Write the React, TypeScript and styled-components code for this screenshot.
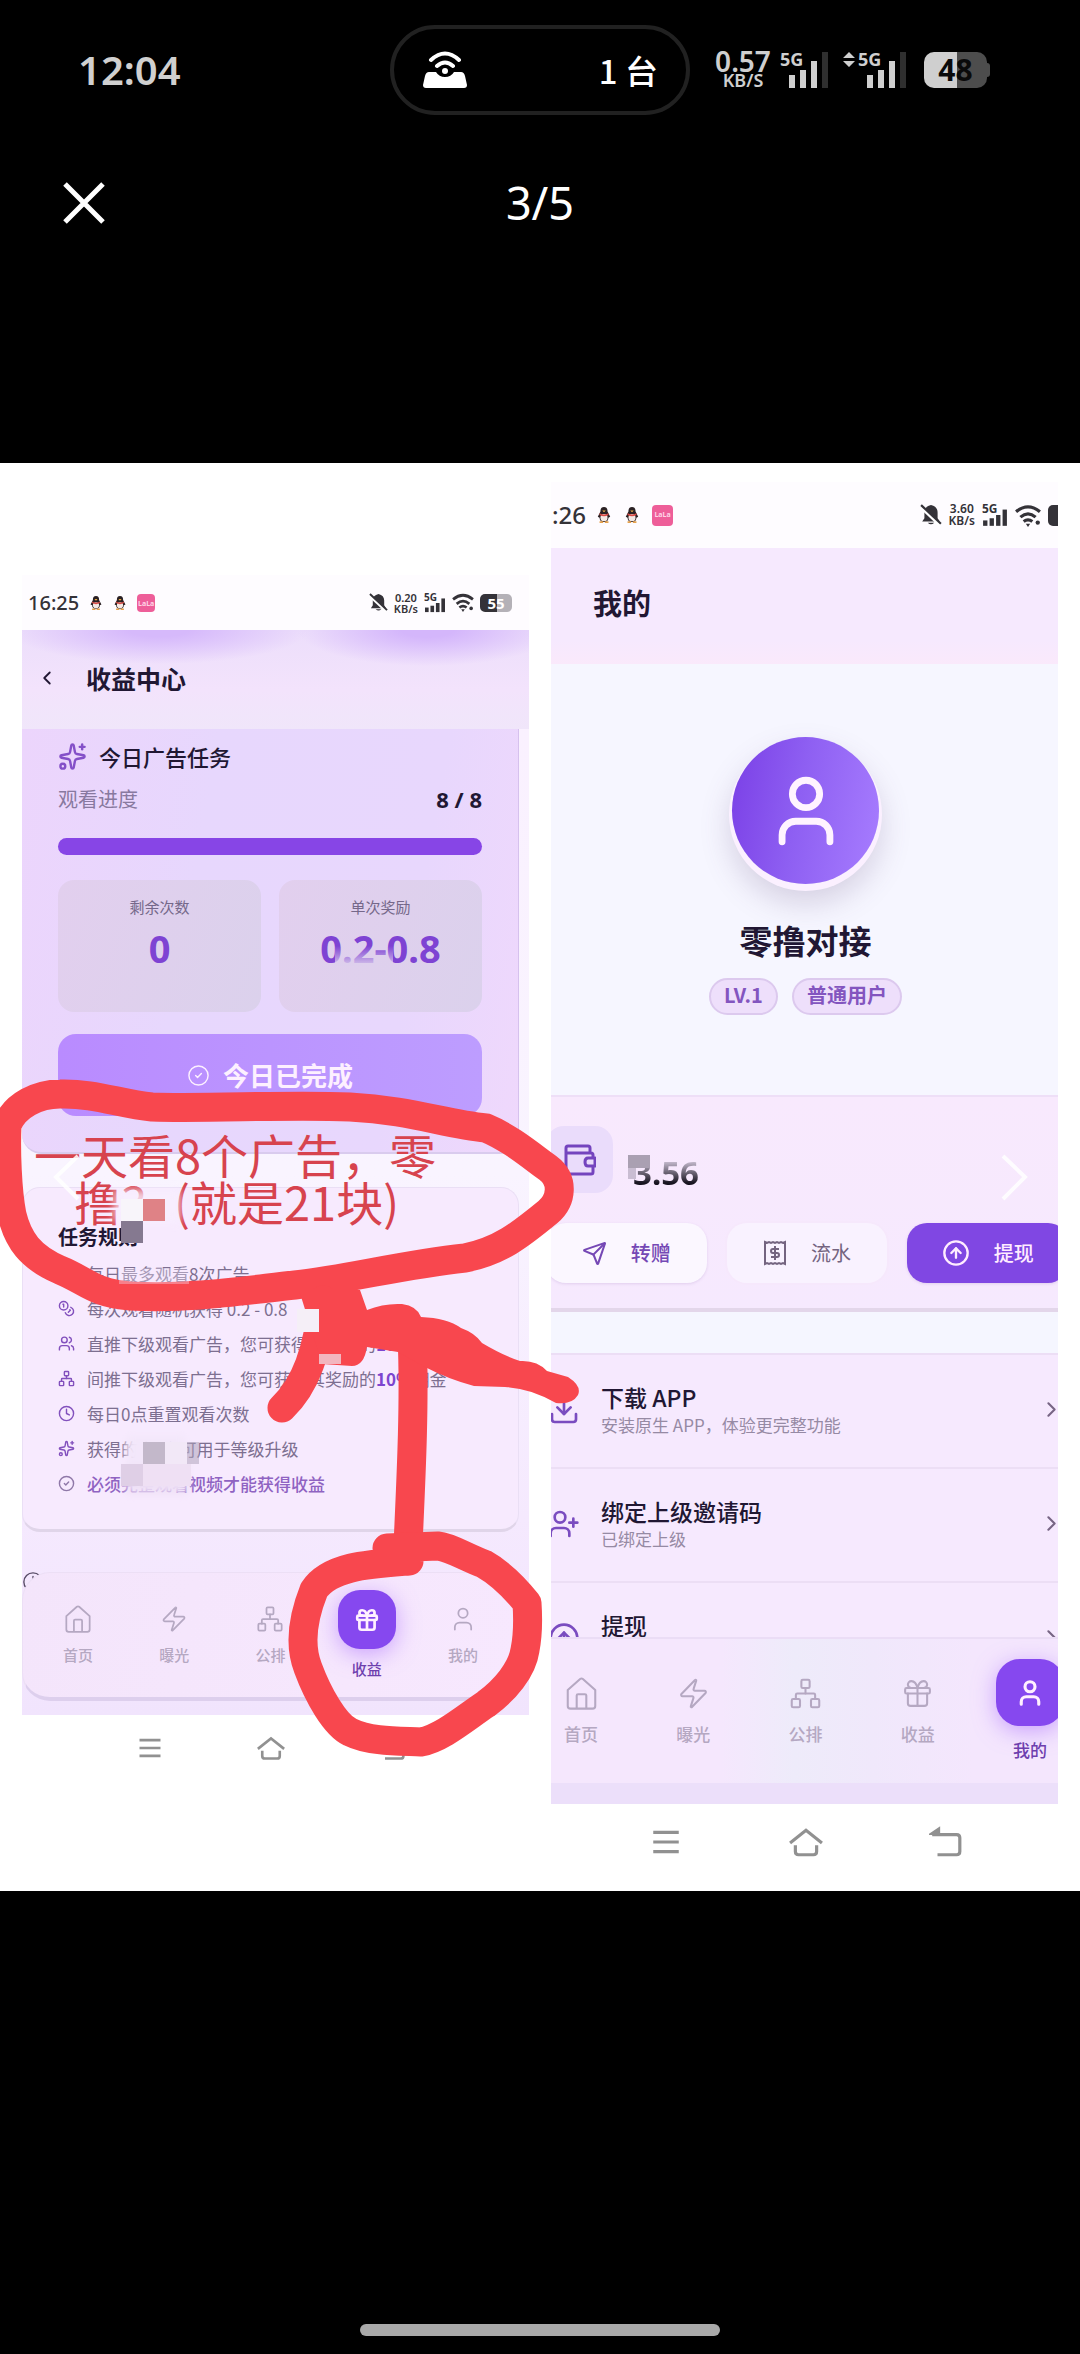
import React from "react";
import styled, { createGlobalStyle, css } from "styled-components";
import {
  ChevronLeft,
  ChevronRight,
  CircleArrowUp,
  CircleCheck,
  Clock,
  Coins,
  Download,
  Gift,
  Network,
  Send,
  Sparkles,
  User,
  UserPlus,
  Users,
  Zap,
} from "lucide-react";

const sans = `"Noto Sans", "Noto Sans CJK SC", sans-serif`;
const cjk = `"Noto Sans CJK SC", "Noto Sans", sans-serif`;
const ink = "#211733";
const violet = "#7d45cf";
const marker = "#f8474e";

const GlobalStyle = createGlobalStyle`
  *, *::before, *::after { box-sizing: border-box; }
  body { margin: 0; background: #000; font-family: ${cjk}; }
  button { border: 0; margin: 0; padding: 0; background: none; font: inherit; color: inherit; }
  h1, h2, p, ul { margin: 0; padding: 0; font-size: inherit; font-weight: inherit; }
  ul { list-style: none; }
  svg { display: block; flex: none; }
`;

const Viewer = styled.main`
  min-height: 100vh;
  display: flex;
  flex-direction: column;
  background: #000;
  color: #fff;
`;

/* ---------- device status bar ---------- */

const DeviceBar = styled.header`
  display: grid;
  grid-template-columns: 390px 300px 1fr;
  align-items: center;
  height: 139px;
`;
const DeviceTime = styled.time`
  padding-left: 78px;
  font: 600 40px/56px ${sans};
  color: #d0d0d0;
`;
const Island = styled.div`
  display: flex;
  align-items: center;
  justify-content: space-between;
  height: 90px;
  padding: 0 28px;
  border: 4px solid #212121;
  border-radius: 45px;
  font: 500 33px/40px ${cjk};
`;
const DeviceSignals = styled.div`
  display: flex;
  align-items: center;
  padding-left: 24px;
  color: #cfcfcf;
`;
const Speed = styled.div`
  display: flex;
  flex-direction: column;
  align-items: center;
  width: 58px;
  margin-right: 8px;
  font: 600 28px/20px ${sans};
  small { font-size: 18px; line-height: 18px; }
`;
const DeviceBattery = styled.div`
  display: flex;
  align-items: center;
  margin-left: 18px;
  &::after {
    content: "";
    width: 3px;
    height: 14px;
    border-radius: 0 3px 3px 0;
    background: #4d4d4d;
  }
`;
const DeviceCell = styled.span`
  width: 63px;
  height: 36px;
  border-radius: 10px;
  background: linear-gradient(90deg, #cfcfcf 52%, #4d4d4d 52%);
  color: #0a0a0a;
  font: 700 30px/36px ${sans};
  text-align: center;
`;
const SignalGroup = styled.div`
  display: flex;
  gap: 14px;
`;

const Toolbar = styled.div`
  display: grid;
  grid-template-columns: 1fr auto 1fr;
  align-items: center;
  height: 128px;
  margin-bottom: 196px;
  padding: 0 60px;
`;
const CloseButton = styled.button`
  justify-self: start;
`;
const Counter = styled.span`
  font: 400 45px/60px ${sans};
`;

/* ---------- photo ---------- */

const Photo = styled.section`
  position: relative;
  display: grid;
  grid-template-columns: 1fr 1fr;
  gap: 22px;
  align-items: start;
  padding: 0 22px;
  background: #fff;
  color: ${ink};
`;
const Shot = styled.article<{ $top: number; $bottom: number }>`
  min-width: 0;
  padding-top: ${(p) => p.$top}px;
  padding-bottom: ${(p) => p.$bottom}px;
`;
const ShotBar = styled.div<{ $large?: boolean }>`
  display: flex;
  align-items: center;
  height: ${(p) => (p.$large ? 66 : 55)}px;
  padding-left: ${(p) => (p.$large ? 1 : 6)}px;
  padding-right: ${(p) => (p.$large ? 0 : 17)}px;
  overflow: hidden;
  color: #343238;
  font: 500 ${(p) => (p.$large ? 24 : 20)}px/30px ${sans};
  background: #fefcff;
`;
const BarApps = styled.span<{ $large?: boolean }>`
  display: flex;
  align-items: center;
  gap: ${(p) => (p.$large ? 12 : 10)}px;
  margin-left: 10px;
`;
const BarTools = styled.span<{ $large?: boolean }>`
  display: flex;
  align-items: center;
  gap: ${(p) => (p.$large ? 7 : 6)}px;
  margin-left: auto;
`;
const PinkApp = styled.span<{ $large?: boolean }>`
  width: ${(p) => (p.$large ? 21 : 18)}px;
  height: ${(p) => (p.$large ? 21 : 18)}px;
  border-radius: 4px;
  background: #ee5e99;
  color: #ffd3e6;
  font: 700 7px/20px ${sans};
  text-align: center;
`;
const SmallSpeed = styled.span<{ $large?: boolean }>`
  display: flex;
  flex-direction: column;
  align-items: center;
  font: 600 ${(p) => (p.$large ? 12 : 11)}px/${(p) => (p.$large ? 12 : 11)}px ${sans};
`;
const SmallBattery = styled.span<{ $clipped?: boolean }>`
  width: ${(p) => (p.$clipped ? 10 : 32)}px;
  height: ${(p) => (p.$clipped ? 21 : 18)}px;
  border-radius: ${(p) => (p.$clipped ? "5px 0 0 5px" : "5px")};
  background: ${(p) => (p.$clipped ? "#343238" : "linear-gradient(90deg, #343238 52%, #b4b1b7 52%)")};
  color: #fff;
  font: 700 15px/18px ${sans};
  text-align: center;
`;

const PageHead = styled.header<{ $large?: boolean }>`
  display: flex;
  align-items: center;
  overflow: hidden;
  ${(p) =>
    p.$large
      ? css`
          height: 116px;
          padding: 0 0 8px 42px;
          background: linear-gradient(#f6e9fe 80%, #fae9fb);
          font: 700 29px/40px ${cjk};
        `
      : css`
          height: 99px;
          padding: 0 0 4px 14px;
          gap: 28px;
          background:
            radial-gradient(ellipse 150px 34px at 27% 0, #d6b9fb 20%, #d6b9fb00),
            radial-gradient(ellipse 130px 36px at 80% 0, #d4b6fb 20%, #d4b6fb00),
            linear-gradient(#ecdefb, #f3e3fc 60%, #f0e6fa);
          font: 700 25px/36px ${cjk};
        `}
`;

const EarnBody = styled.div`
  padding: 0 10px 14px 0;
  background: linear-gradient(#faf1ff 0%, #f9f4ff 45%, #f5e9fe 80%, #f1e4fd);
`;
const TaskCard = styled.section`
  padding: 13px 36px 36px;
  border-right: 1px solid #d6c1ee;
  border-bottom: 2px solid #d9cbee;
  border-radius: 0 0 20px 20px;
  background: linear-gradient(100deg, #ecd5fc, #e7d7fd 35%, #e8d7fd 75%, #efd8fc);
`;
const TaskTitle = styled.h2`
  display: flex;
  align-items: center;
  gap: 12px;
  height: 28px;
  font: 500 22px/28px ${cjk};
  svg { color: #8450c8; }
`;
const ProgressLine = styled.div`
  display: flex;
  justify-content: space-between;
  margin-top: 15px;
  font: 400 20px/28px ${cjk};
  color: #88799f;
  strong { font: 700 22px/28px ${sans}; color: ${ink}; }
`;
const ProgressTrack = styled.div`
  height: 17px;
  margin: 25px 0 25px;
  border-radius: 9px;
  background: #8745e6;
`;
const StatGrid = styled.div`
  display: grid;
  grid-template-columns: 1fr 1fr;
  gap: 18px;
`;
const Stat = styled.div`
  position: relative;
  height: 132px;
  padding-top: 16px;
  border-radius: 16px;
  background: linear-gradient(110deg, #e2cfee, #dbd1ec);
  text-align: center;
  color: #75688a;
  font: 400 15px/22px ${cjk};
  strong {
    display: block;
    margin-top: 9px;
    color: #7e43d3;
    font: 700 38px/42px ${sans};
  }
`;
const Smear = styled.span`
  position: absolute;
  left: 56px;
  top: 66px;
  width: 58px;
  height: 20px;
  background: linear-gradient(#ded0ed00, #ded0edee);
`;
const DoneButton = styled.button`
  display: flex;
  align-items: center;
  justify-content: center;
  gap: 13px;
  width: 100%;
  height: 82px;
  margin-top: 22px;
  border-radius: 18px;
  background: linear-gradient(90deg, #b98bff, #bd9dff);
  color: #fdf0ff;
  font: 700 26px/36px ${cjk};
`;

const RulesCard = styled.section`
  margin-top: 33px;
  padding: 37px 20px 28px 35px;
  border: 1px solid #eadff5;
  border-bottom: 3px solid #e0d5e9;
  border-radius: 18px;
  background: #f7eafe;
`;
const RulesTitle = styled.h2`
  margin-bottom: 7px;
  font: 700 20px/24px ${cjk};
`;
const Rule = styled.li<{ $accent?: boolean }>`
  display: flex;
  align-items: center;
  gap: 12px;
  height: 35px;
  white-space: nowrap;
  font: ${(p) => (p.$accent ? 500 : 400)} 17px/24px ${cjk};
  color: ${(p) => (p.$accent ? "#8f63c2" : "#7d6f90")};
  svg { color: ${(p) => (p.$accent ? "#8f78a8" : "#8250bd")}; }
  strong { font-weight: 700; color: ${violet}; }
`;
const LooseIcon = styled.div`
  height: 20px;
  margin-top: 39px;
  color: #584c66;
`;

const TabBar = styled.nav<{ $wide?: boolean }>`
  position: relative;
  display: grid;
  grid-template-columns: repeat(5, 1fr);
  align-items: start;
  ${(p) =>
    p.$wide
      ? css`
          height: 146px;
          margin: 0 -28px 0 -26px;
          padding-top: 38px;
          border-top: 2px solid #ebddf6;
          background: linear-gradient(90deg, #f5e7fd 35%, #eeebfa 48%, #f0e8fb 62%, #f4e6fd 80%);
          font: 500 17px/24px ${cjk};
        `
      : css`
          height: 129px;
          margin-top: -19px;
          padding: 32px 7px 0;
          border: 1px solid #ecdff5;
          border-bottom: 4px solid #ddcfed;
          border-radius: 28px;
          background: linear-gradient(100deg, #f4e5fb, #f7e8fe);
          font: 500 15px/20px ${cjk};
        `}
`;
const Tab = styled.button<{ $wide?: boolean; $active?: boolean }>`
  display: flex;
  flex-direction: column;
  align-items: center;
  gap: ${(p) => (p.$wide ? 12 : p.$active ? 10 : 12)}px;
  margin-top: ${(p) => (p.$active ? (p.$wide ? -18 : -15) : 0)}px;
  color: ${(p) => (p.$active ? "#6d3eae" : "#b5a8c2")};
`;
const TabPlate = styled.span<{ $wide?: boolean }>`
  display: grid;
  place-items: center;
  width: ${(p) => (p.$wide ? 68 : 58)}px;
  height: ${(p) => (p.$wide ? 67 : 59)}px;
  border-radius: ${(p) => (p.$wide ? 24 : 22)}px;
  background: #8648ef;
  color: #fff0ff;
  box-shadow: 0 5px 22px #a566ff88;
`;
const SystemKeys = styled.div<{ $wide?: boolean }>`
  display: flex;
  justify-content: center;
  gap: ${(p) => (p.$wide ? 106 : 93)}px;
  padding: ${(p) => (p.$wide ? "21px 0 0 2px" : "19px 10px 0 0")};
  color: #919191;
`;

const ProfileBody = styled.div`
  overflow: hidden;
  padding-bottom: 21px;
  background: #ecdffa;
`;
const Profile = styled.section`
  display: flex;
  flex-direction: column;
  align-items: center;
  padding: 73px 0 80px 2px;
  background: #f6f6ff;
`;
const Avatar = styled.div`
  display: grid;
  place-items: center;
  width: 147px;
  height: 147px;
  border-radius: 50%;
  background: linear-gradient(100deg, #7a3fe6, #8e5ff2 45%, #a77dff);
  color: #fff3ff;
  box-shadow: 0 4px 0 3px #fbf0ff, 0 17px 30px 2px #5f4a7a38;
`;
const UserName = styled.h1`
  margin-top: 36px;
  font: 700 33px/40px ${cjk};
`;
const Badges = styled.div`
  display: flex;
  gap: 14px;
  margin-top: 18px;
`;
const Badge = styled.span`
  height: 37px;
  padding: 0 13px;
  border: 2px solid #dcc9ee;
  border-radius: 19px;
  background: #eedffb;
  color: #8355bf;
  font: 700 20px/30px ${cjk};
`;

const Wallet = styled.section`
  height: 217px;
  padding-top: 29px;
  border-top: 2px solid #eedff7;
  border-bottom: 4px solid #e3d6ea;
  background: linear-gradient(#f8e9fd, #f6e9fe);
`;
const Balance = styled.div`
  display: flex;
  align-items: center;
  gap: 20px;
`;
const WalletTile = styled.span`
  display: grid;
  place-items: center;
  width: 67px;
  height: 67px;
  margin-left: -5px;
  border-radius: 18px;
  background: #eadcfb;
  color: #7444be;
`;
const Amount = styled.strong`
  padding: 26px 0 0 0;
  font: 700 33px/40px ${sans};
  background: linear-gradient(#d7cfdf00 42%, #b7adc0 55%, #17131f 85%);
  background-clip: text;
  color: transparent;
`;
const Actions = styled.div`
  display: grid;
  grid-template-columns: repeat(3, 1fr);
  gap: 20px;
  margin: 30px -10px 0 -5px;
`;
const Action = styled.button<{ $tone: "violet" | "plain" | "solid" }>`
  display: flex;
  align-items: center;
  justify-content: center;
  gap: 24px;
  height: 60px;
  border-radius: 20px;
  background: ${(p) => (p.$tone === "solid" ? "#8047e3" : p.$tone === "plain" ? "#f9f2ff" : "#fbf7ff")};
  color: ${(p) => (p.$tone === "solid" ? "#ffecff" : p.$tone === "plain" ? "#746480" : "#7548b5")};
  box-shadow: ${(p) => (p.$tone === "plain" ? "0 0 0 2px #f6e8fc" : "0 1px 3px #b79bd055")};
  font: ${(p) => (p.$tone === "plain" ? 400 : 500)} 20px/28px ${cjk};
`;

const Menu = styled.ul`
  border-top: 41px solid #f5f6ff;
  background: #f6e9fe;
`;
const MenuItem = styled.li<{ $cut?: boolean }>`
  height: ${(p) => (p.$cut ? 56 : 114)}px;
  overflow: hidden;
`;
const MenuRow = styled.button`
  display: flex;
  align-items: center;
  width: 100%;
  height: 114px;
  padding-bottom: 3px;
  border-top: 2px solid #ecdef5;
  text-align: left;
  & > svg:first-child { margin-left: -3px; color: #7a4cc0; }
  & > svg:last-child { margin-left: auto; margin-right: -6px; color: #776584; }
`;
const MenuText = styled.span`
  display: flex;
  flex-direction: column;
  margin-left: 21px;
  font: 500 23px/30px ${cjk};
  small { min-height: 26px; font-size: 17px; font-weight: 400; line-height: 26px; color: #968aa4; }
`;

/* ---------- marks drawn over the photo ---------- */

const Ink = styled.svg`
  position: absolute;
  inset: 0;
  width: 100%;
  height: 100%;
  pointer-events: none;
`;
const Note = styled.p`
  position: absolute;
  left: 34px;
  top: 667px;
  color: #d7434e;
  font: 400 47px/47px ${cjk};
  white-space: nowrap;
`;
const NoteLine = styled.span<{ $indent?: boolean }>`
  display: block;
  padding-left: ${(p) => (p.$indent ? 40 : 0)}px;
`;
const NoteGap = styled.span`
  display: inline-block;
  width: 27px;
`;

const HomeIndicator = styled.div`
  width: 33.333%;
  height: 12px;
  margin: auto auto 18px;
  border-radius: 6px;
  background: #a9a9a9;
`;

/* ---------- drawings ---------- */

const DeviceNetwork = ({ arrows }: { arrows?: boolean }) => (
  <svg width={arrows ? 64 : 48} height="40" viewBox={arrows ? "-16 0 64 40" : "0 0 48 40"} fill="#cfcfcf" aria-label="5G">
    {arrows && <path d="M-15 8l6-6 6 6zM-15 11l6 6 6-6z" />}
    <text x="0" y="16" fontFamily="Noto Sans" fontWeight="700" fontSize="18">5G</text>
    <rect x="9" y="25" width="6" height="13" />
    <rect x="20" y="20" width="6" height="18" />
    <rect x="31" y="11" width="6" height="27" />
    <rect x="42" y="2" width="6" height="36" fill="#2f2f2f" />
  </svg>
);

const Hotspot = () => (
  <svg width="46" height="38" viewBox="0 0 46 38" fill="none" stroke="#fff" strokeWidth="4" strokeLinecap="round" aria-hidden>
    <path d="M1 34 3 25q1-4 4-4h7q3 5 9 5t9-5h7q3 0 4 4l2 9q0 3-3 3H4q-3 0-3-3z" fill="#fff" stroke="none" />
    <path d="M9 9q14-13 28 0M15 15q8-7 16 0" />
    <circle cx="23" cy="20" r="3" fill="#fff" stroke="none" />
  </svg>
);

const Penguin = ({ size }: { size: number }) => (
  <svg width={size} height={size} viewBox="0 0 16 18" aria-hidden>
    <path d="M8 0c3 0 4 2 4 5l3 6-2 1c0 3-2 5-5 5s-5-2-5-5l-2-1 3-6c0-3 1-5 4-5z" fill="#2b2124" />
    <ellipse cx="8" cy="12" rx="4" ry="4" fill="#f5e9e4" />
    <path d="M3 7q5 3 10 0v2q-5 3-10 0z" fill="#dc4b45" />
    <path d="M6 4h4l-2 2z" fill="#f0b14a" />
    <path d="M3 16h4v2H3zM9 16h4v2H9z" fill="#e6a14c" />
  </svg>
);

const Muted = ({ size }: { size: number }) => (
  <svg width={size} height={size} viewBox="0 0 20 20" aria-hidden>
    <path d="M10 1c4 1 6 3 6 7v5l2 3H2l2-3V8c0-4 2-6 6-7zM7 17h6q-3 3-6 0z" fill="#343238" />
    <path d="M1 3l17 16" stroke="#fff" strokeWidth="3" />
    <path d="M1 1l18 17" stroke="#343238" strokeWidth="2" />
  </svg>
);

const Network5 = ({ size }: { size: number }) => (
  <svg width={size} height={size - 2} viewBox="0 0 24 22" fill="currentColor" aria-label="5G">
    <text x="0" y="9" fontFamily="Noto Sans" fontWeight="700" fontSize="11">5G</text>
    <rect x="1" y="16" width="4" height="5" />
    <rect x="7" y="14" width="4" height="7" />
    <rect x="13" y="11" width="4" height="10" />
    <rect x="19" y="6" width="4" height="15" />
  </svg>
);

const Waves = ({ size }: { size: number }) => (
  <svg width={size} height={size - 3} viewBox="0 0 24 21" fill="none" stroke="currentColor" strokeWidth="3" aria-hidden>
    <path d="M1 7q11-9 22 0M5 12q7-6 14 0M8 16q4-3 8 0" />
    <path d="M10 18h4l-2 3z" fill="currentColor" stroke="none" />
    <circle cx="21" cy="17" r="2" fill="currentColor" stroke="none" />
  </svg>
);

const HouseIcon = ({ size }: { size: number }) => (
  <svg width={size} height={size} viewBox="0 0 24 24" fill="none" stroke="currentColor" strokeWidth="1.5" strokeLinejoin="round" aria-hidden>
    <path d="M2 9.5 11 1.5q1-.8 2 0l9 8V21q0 2-2 2H4q-2 0-2-2z" />
    <path d="M8.500 23v-9.500q0-1 1-1h5q1 0 1 1V23" />
  </svg>
);

const WalletIcon = () => (
  <svg width="32" height="32" viewBox="0 0 32 32" fill="none" stroke="currentColor" strokeWidth="3" strokeLinejoin="round" aria-hidden>
    <path d="M26 9V4q0-2-2-2H4Q2 2 2 4v23q0 3 3 3h22q2 0 2-2v-6M2 9h25q2 0 2 2v3" />
    <path d="M31 14h-7q-3 0-3 4t3 4h7z" />
  </svg>
);

const Receipt = () => (
  <svg width="24" height="26" viewBox="0 0 24 26" fill="none" stroke="currentColor" strokeWidth="2" aria-hidden>
    <path d="M2 2l2 1 2-1 2 1 2-1 2 1 2-1 2 1 2-1 2 1 2-1v22l-2-1-2 1-2-1-2 1-2-1-2 1-2-1-2 1-2-1-2 1z" />
    <path d="M16 9h-6a2 2 0 0 0 0 4h4a2 2 0 0 1 0 4H8M12 6v14" />
  </svg>
);

const KeyIcon = ({ kind, size }: { kind: "menu" | "home" | "back"; size: number }) => (
  <svg width={size} height={size} viewBox="0 0 32 32" fill="none" stroke="currentColor" strokeWidth="3" aria-hidden>
    {kind === "menu" && <path d="M4 7h24M4 16h24M4 25h24" />}
    {kind === "home" && <path d="M1 17 16 5l15 12M6 19v6q0 3 3 3h14q3 0 3-3v-6" />}
    {kind === "back" && <path d="M3 9h23q3 0 3 3v13q0 3-3 3H8M3 8l6-4v4z" />}
  </svg>
);

const BarStatus = ({ large, time }: { large?: boolean; time: string }) => (
  <ShotBar $large={large}>
    <time>{time}</time>
    <BarApps $large={large}>
      <Penguin size={large ? 16 : 14} />
      <Penguin size={large ? 16 : 14} />
      <PinkApp $large={large}>LaLa</PinkApp>
    </BarApps>
    <BarTools $large={large}>
      <Muted size={large ? 22 : 19} />
      <SmallSpeed $large={large}>
        <span>{large ? "3.60" : "0.20"}</span>
        <span>KB/s</span>
      </SmallSpeed>
      <Network5 size={large ? 26 : 22} />
      <Waves size={large ? 26 : 22} />
      <SmallBattery $clipped={large}>{large ? "" : "55"}</SmallBattery>
    </BarTools>
  </ShotBar>
);

const tabs = ["首页", "曝光", "公排", "收益", "我的"];

const Tabs = ({ active, wide }: { active: string; wide?: boolean }) => {
  const size = wide ? 33 : 28;
  const icon = (name: string, s: number, w: number) => {
    if (name === "首页") return <HouseIcon size={s} />;
    if (name === "曝光") return <Zap size={s} strokeWidth={w} />;
    if (name === "公排") return <Network size={s} strokeWidth={w} />;
    if (name === "收益") return <Gift size={s} strokeWidth={w} />;
    return <User size={s} strokeWidth={w} />;
  };
  return (
    <TabBar $wide={wide}>
      {tabs.map((name) => (
        <Tab key={name} $wide={wide} $active={name === active}>
          {name === active ? <TabPlate $wide={wide}>{icon(name, wide ? 30 : 26, 2.5)}</TabPlate> : icon(name, size, 1.5)}
          <span>{name}</span>
        </Tab>
      ))}
    </TabBar>
  );
};

const rules = [
  { icon: Sparkles, text: "每日最多观看8次广告" },
  { icon: Coins, text: "每次观看随机获得 0.2 - 0.8" },
  { icon: Users, text: "直推下级观看广告，您可获得其奖励的", rate: "10%" },
  { icon: Network, text: "间推下级观看广告，您可获得其奖励的", rate: "10%" },
  { icon: Clock, text: "每日0点重置观看次数" },
  { icon: Sparkles, text: "获得的 经验 可用于等级升级" },
  { icon: CircleCheck, text: "必须完整观看视频才能获得收益", accent: true },
];

const Keys = ({ wide }: { wide?: boolean }) => (
  <SystemKeys $wide={wide}>
    <KeyIcon kind="menu" size={wide ? 34 : 28} />
    <KeyIcon kind="home" size={wide ? 34 : 28} />
    <KeyIcon kind="back" size={wide ? 34 : 28} />
  </SystemKeys>
);

export default function App() {
  return (
    <Viewer>
      <GlobalStyle />
      <DeviceBar>
        <DeviceTime>12:04</DeviceTime>
        <Island>
          <Hotspot />
          <span>1 台</span>
        </Island>
        <DeviceSignals>
          <Speed>
            <span>0.57</span>
            <small>KB/S</small>
          </Speed>
          <SignalGroup>
            <DeviceNetwork />
            <DeviceNetwork arrows />
          </SignalGroup>
          <DeviceBattery>
            <DeviceCell>48</DeviceCell>
          </DeviceBattery>
        </DeviceSignals>
      </DeviceBar>
      <Toolbar>
        <CloseButton aria-label="关闭">
          <svg width="48" height="48" viewBox="0 0 48 48" stroke="#fff" strokeWidth="5" aria-hidden>
            <path d="M5 5l38 38M43 5 5 43" />
          </svg>
        </CloseButton>
        <Counter>3/5</Counter>
      </Toolbar>

      <Photo>
        <Shot $top={112} $bottom={0}>
          <BarStatus time="16:25" />
          <PageHead>
            <ChevronLeft size={22} />
            <h1>收益中心</h1>
          </PageHead>
          <EarnBody>
            <TaskCard>
              <TaskTitle>
                <Sparkles size={29} />
                今日广告任务
              </TaskTitle>
              <ProgressLine>
                <span>观看进度</span>
                <strong>8 / 8</strong>
              </ProgressLine>
              <ProgressTrack role="progressbar" aria-label="观看进度" aria-valuenow={8} aria-valuemax={8} />
              <StatGrid>
                <Stat>
                  剩余次数
                  <strong>0</strong>
                </Stat>
                <Stat>
                  单次奖励
                  <strong>0.2-0.8</strong>
                  <Smear />
                </Stat>
              </StatGrid>
              <DoneButton>
                <CircleCheck size={23} strokeWidth={1.5} />
                今日已完成
              </DoneButton>
            </TaskCard>
            <RulesCard>
              <RulesTitle>任务规则</RulesTitle>
              <ul>
                {rules.map(({ icon: Icon, text, rate, accent }) => (
                  <Rule key={text} $accent={accent}>
                    <Icon size={17} />
                    <span>
                      {text}
                      {rate && <strong>{rate}</strong>}
                      {rate && "佣金"}
                    </span>
                  </Rule>
                ))}
              </ul>
            </RulesCard>
            <LooseIcon>
              <Clock size={22} strokeWidth={1.5} />
            </LooseIcon>
            <Tabs active="收益" />
          </EarnBody>
          <Keys />
        </Shot>

        <Shot $top={19} $bottom={32}>
          <BarStatus large time=":26" />
          <PageHead $large>
            <h1>我的</h1>
          </PageHead>
          <ProfileBody>
            <Profile>
              <Avatar>
                <User size={82} strokeWidth={2} />
              </Avatar>
              <UserName>零撸对接</UserName>
              <Badges>
                <Badge>LV.1</Badge>
                <Badge>普通用户</Badge>
              </Badges>
            </Profile>
            <Wallet>
              <Balance>
                <WalletTile>
                  <WalletIcon />
                </WalletTile>
                <Amount>3.56</Amount>
              </Balance>
              <Actions>
                <Action $tone="violet">
                  <Send size={25} />
                  转赠
                </Action>
                <Action $tone="plain">
                  <Receipt />
                  流水
                </Action>
                <Action $tone="solid">
                  <CircleArrowUp size={28} />
                  提现
                </Action>
              </Actions>
            </Wallet>
            <Menu>
              <MenuItem>
                <MenuRow>
                  <Download size={32} />
                  <MenuText>
                    下载 APP
                    <small>安装原生 APP，体验更完整功能</small>
                  </MenuText>
                  <ChevronRight size={25} />
                </MenuRow>
              </MenuItem>
              <MenuItem>
                <MenuRow>
                  <UserPlus size={32} />
                  <MenuText>
                    绑定上级邀请码
                    <small>已绑定上级</small>
                  </MenuText>
                  <ChevronRight size={25} />
                </MenuRow>
              </MenuItem>
              <MenuItem $cut>
                <MenuRow>
                  <CircleArrowUp size={32} />
                  <MenuText>
                    提现
                    <small />
                  </MenuText>
                  <ChevronRight size={25} />
                </MenuRow>
              </MenuItem>
            </Menu>
            <Tabs wide active="我的" />
          </ProfileBody>
          <Keys wide />
        </Shot>

        <Note>
          <NoteLine>一天看8个广告，零</NoteLine>
          <NoteLine $indent>
            撸3
            <NoteGap />
            (就是21块)
          </NoteLine>
        </Note>

        <Ink viewBox="0 463 1080 1428" preserveAspectRatio="none" aria-hidden>
          <defs>
            <filter id="soft" x="-30%" y="-30%" width="160%" height="160%">
              <feGaussianBlur stdDeviation="4" />
            </filter>
          </defs>
          <g fill="none" stroke={marker} strokeWidth="29" strokeLinecap="round" strokeLinejoin="round">
            <path d="M7 1125C15 1105 38 1094 60 1094C95 1093 120 1104 152 1107C210 1109 290 1104 350 1107C410 1110 445 1124 486 1128C510 1138 530 1155 548 1168C564 1180 562 1200 548 1212C520 1235 500 1251 465 1258C400 1265 350 1279 295 1285C240 1291 190 1299 130 1296C95 1294 85 1280 60 1270C30 1257 18 1240 12 1215C7 1190 6 1150 7 1125Z" />
            <path d="M282 1408C306 1385 318 1350 323 1300" />
            <path d="M412 1335C415 1400 411 1480 408 1545" />
            <path d="M409 1561C370 1564 330 1566 314 1590C302 1620 299 1645 308 1668C318 1695 335 1725 350 1732C370 1742 400 1741 421 1742C442 1738 465 1718 486 1704C505 1690 522 1670 525 1650C528 1635 528 1618 527 1603C515 1588 500 1573 484 1564C465 1557 450 1547 438 1546L387 1548" />
          </g>
          <path
            d="M299 1290H360L367 1310Q384 1303 402 1304Q417 1306 421 1317Q447 1318 461 1328Q475 1333 482 1343Q504 1356 520 1361Q537 1360 547 1371L568 1377Q582 1386 578 1395Q572 1405 556 1403Q530 1388 505 1387L474 1386Q448 1379 425 1367L398 1352L367 1347Q364 1366 352 1366L322 1364Z"
            fill={marker}
          />
          <rect x="119" y="1268" width="70" height="16" fill="#f6eafe" opacity=".35" />
          <rect x="114" y="1190" width="66" height="32" fill="#f8effe" opacity=".82" filter="url(#soft)" />
          <rect x="121" y="1199" width="22" height="22" fill="#f8f5fa" />
          <rect x="143" y="1199" width="22" height="22" fill="#df8286" />
          <rect x="121" y="1221" width="22" height="22" fill="#857990" />
          <rect x="297" y="1309" width="22" height="23" fill="#f5eff7" />
          <rect x="319" y="1354" width="22" height="10" fill="#f2b6bf" />
          <g filter="url(#soft)">
            <rect x="126" y="1436" width="60" height="30" fill="#f3e7fa" />
            <rect x="126" y="1466" width="62" height="28" fill="#efe1f6" />
          </g>
          <rect x="143" y="1442" width="22" height="22" fill="#c3b8ca" />
          <rect x="165" y="1442" width="22" height="22" fill="#f2e8f7" />
          <rect x="187" y="1442" width="12" height="22" fill="#a99db5" opacity=".5" />
          <rect x="121" y="1464" width="22" height="22" fill="#dfcfe6" />
          <rect x="143" y="1464" width="48" height="22" fill="#efe0f4" />
          <rect x="628" y="1155" width="22" height="13" fill="#aaa0b2" />
          <rect x="628" y="1168" width="8" height="11" fill="#c9bdd2" />
          <path d="M78 1156 56 1177 78 1199M1003 1156 1025 1177 1003 1199" fill="none" stroke="#fff" strokeWidth="4" opacity=".85" />
        </Ink>
      </Photo>
      <HomeIndicator />
    </Viewer>
  );
}
